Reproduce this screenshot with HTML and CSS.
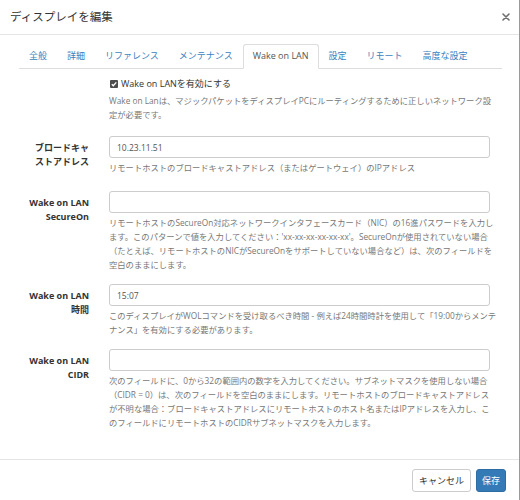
FILE: index.html
```html
<!DOCTYPE html>
<html lang="ja">
<head>
<meta charset="utf-8">
<title>ディスプレイを編集</title>
<link rel="stylesheet" href="styles.css">
</head>
<body>
<div class="modal">
  <header class="modal-header">
    <h4 class="modal-title">ディスプレイを編集</h4>
    <button class="close" type="button" aria-label="close">
      <svg width="8" height="8" viewBox="0 0 8 8"><path d="M1 1L7 7M7 1L1 7" stroke="#6f6f6f" stroke-width="1.6" stroke-linecap="round"/></svg>
    </button>
  </header>
  <div class="modal-body">
    <ul class="tabs">
      <li class="tab"><a>全般</a></li>
      <li class="tab"><a>詳細</a></li>
      <li class="tab"><a>リファレンス</a></li>
      <li class="tab"><a>メンテナンス</a></li>
      <li class="tab active"><a>Wake on LAN</a></li>
      <li class="tab"><a>設定</a></li>
      <li class="tab"><a>リモート</a></li>
      <li class="tab"><a>高度な設定</a></li>
    </ul>
    <form class="form">
      <div class="row check-row">
        <div></div>
        <div class="control">
          <label class="check">
            <span class="box"><svg width="8" height="8" viewBox="0 0 8 8"><rect width="8" height="8" rx="1" fill="#4d4d4d"/><path d="M1.8 4.2L3.3 5.7L6.3 2.4" stroke="#fff" stroke-width="1.3" fill="none"/></svg></span>
            Wake on LANを有効にする
          </label>
          <p class="help">Wake on Lanは、マジックパケットをディスプレイPCにルーティングするために正しいネットワーク設<br>定が必要です。</p>
        </div>
      </div>
      <div class="row group group-first">
        <label class="label">ブロードキャ<br>ストアドレス</label>
        <div class="control">
          <input class="input" type="text" value="10.23.11.51">
          <p class="help">リモートホストのブロードキャストアドレス（またはゲートウェイ）のIPアドレス</p>
        </div>
      </div>
      <div class="row group">
        <label class="label">Wake on LAN<br>SecureOn</label>
        <div class="control">
          <input class="input" type="text" value="">
          <p class="help">リモートホストのSecureOn対応ネットワークインタフェースカード（NIC）の16進パスワードを入力し<br>ます。このパターンで値を入力してください：'xx-xx-xx-xx-xx-xx'。SecureOnが使用されていない場合<br>（たとえば、リモートホストのNICがSecureOnをサポートしていない場合など）は、次のフィールドを<br>空白のままにします。</p>
        </div>
      </div>
      <div class="row group">
        <label class="label">Wake on LAN<br>時間</label>
        <div class="control">
          <input class="input" type="text" value="15:07">
          <p class="help">このディスプレイがWOLコマンドを受け取るべき時間 - 例えば24時間時計を使用して「19:00からメンテ<br>ナンス」を有効にする必要があります。</p>
        </div>
      </div>
      <div class="row group">
        <label class="label">Wake on LAN<br>CIDR</label>
        <div class="control">
          <input class="input" type="text" value="">
          <p class="help">次のフィールドに、0から32の範囲内の数字を入力してください。サブネットマスクを使用しない場合<br>（CIDR = 0）は、次のフィールドを空白のままにします。リモートホストのブロードキャストアドレス<br>が不明な場合：ブロードキャストアドレスにリモートホストのホスト名またはIPアドレスを入力し、こ<br>のフィールドにリモートホストのCIDRサブネットマスクを入力します。</p>
        </div>
      </div>
    </form>
  </div>
  <footer class="modal-footer">
    <button class="btn" type="button">キャンセル</button>
    <button class="btn btn-primary" type="button">保存</button>
  </footer>
</div>
</body>
</html>
```
FILE: styles.css
```css
* { box-sizing: border-box; }

body {
  margin: 0;
  background: #fff;
  font-family: "Open Sans", "Noto Sans CJK JP", sans-serif;
  color: #333;
}

.modal {
  width: 520px;
  height: 500px;
  display: flex;
  flex-direction: column;
  border-right: 1px solid #9a9a9a;
  background: #fff;
}

.modal-header {
  flex: none;
  height: 35px;
  border-bottom: 1px solid #e5e5e5;
  display: flex;
  align-items: center;
  justify-content: space-between;
  padding: 0 9px 0 10px;
}

.modal-title {
  margin: 0;
  font-size: 11.5px;
  font-weight: 400;
  line-height: 16px;
  color: #333;
}

.close {
  border: 0;
  background: none;
  padding: 0;
  width: 8px;
  height: 8px;
  display: flex;
}

.modal-body {
  flex: 1;
  padding: 9px 0 0;
}

.tabs {
  list-style: none;
  margin: 0 17px 0 19px;
  padding: 0;
  display: flex;
  border-bottom: 1px solid #ddd;
}

.tab {
  margin-bottom: -1px;
}

.tab a {
  display: block;
  padding: 4px 9px 5px;
  line-height: 14px;
  font-size: 9px;
  color: #3a7fc1;
  border: 1px solid transparent;
  border-radius: 3px 3px 0 0;
  white-space: nowrap;
}

.tab.active a {
  color: #555;
  background: #fff;
  border-color: #ddd;
  border-bottom-color: #fff;
}

.form {
  margin: 0;
  padding-top: 8px;
}

.row {
  display: grid;
  grid-template-columns: 89px 381px;
  column-gap: 20px;
}

.check-row {
  margin-bottom: 14px;
}

.group {
  margin-bottom: 12px;
}

.group-first {
  margin-bottom: 16px;
}

.check {
  display: flex;
  align-items: center;
  gap: 3px;
  padding-left: 1px;
  font-size: 9px;
  line-height: 14px;
  color: #333;
}

.box {
  display: flex;
  width: 8px;
  height: 8px;
}

.help {
  margin: 3px 0 0;
  font-size: 8.3px;
  line-height: 14px;
  color: #777;
  white-space: nowrap;
}

.label {
  text-align: right;
  font-weight: 700;
  font-size: 9px;
  line-height: 14px;
  padding-top: 5px;
  color: #333;
}

.input {
  display: block;
  width: 100%;
  height: 22px;
  margin: 0;
  border: 1px solid #ccc;
  border-radius: 3px;
  padding: 0 7px;
  font-family: "Open Sans", "Noto Sans CJK JP", sans-serif;
  font-size: 8.5px;
  color: #555;
  background: #fff;
}

.modal-footer {
  flex: none;
  height: 41px;
  border-top: 1px solid #e5e5e5;
  display: flex;
  justify-content: flex-end;
  align-items: flex-start;
  gap: 5px;
  padding: 9px 13px 0 0;
}

.btn {
  height: 23px;
  padding: 0 6px;
  border: 1px solid #ccc;
  border-radius: 3px;
  background: #fff;
  color: #333;
  font-family: "Open Sans", "Noto Sans CJK JP", sans-serif;
  font-size: 9px;
  line-height: 14px;
}

.btn-primary {
  background: #337ab7;
  border-color: #2e6da4;
  color: #fff;
  padding: 0 5px;
}
```
